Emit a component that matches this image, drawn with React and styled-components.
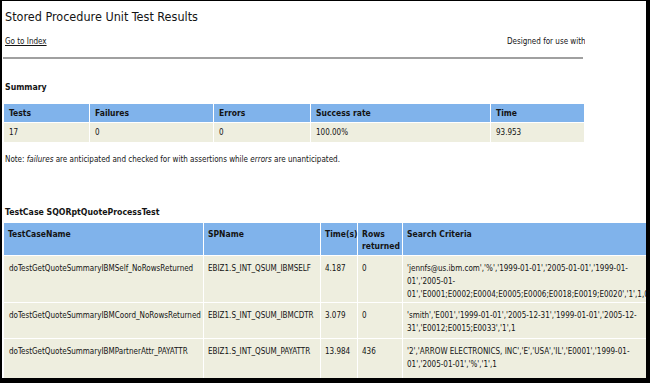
import React from "react";
import styled, { createGlobalStyle } from "styled-components";

const Global = createGlobalStyle`
  html, body { margin: 0; padding: 0; background: #fff; }
  body { font-family: "DejaVu Sans Condensed", "Liberation Sans Narrow", "Liberation Sans", sans-serif; color: #141414; }
`;

const Frame = styled.div`
  width: 650px;
  height: 383px;
  box-sizing: border-box;
  border-style: solid;
  border-color: #000;
  border-width: 1px 4px 5px 2px;
  overflow: hidden;
  background: #fff;
  padding-left: 1px;
`;

const Title = styled.h1`
  margin: 0;
  padding: 6px 0 0 2px;
  font-size: 12.5px;
  font-weight: normal;
  line-height: 20px;
  white-space: nowrap;
`;

const HeaderBar = styled.div`
  width: 582px;
  display: grid;
  grid-template-columns: 1fr 78px;
  font-size: 8px;
  line-height: 12px;
  margin-top: 9px;
  padding-left: 2px;
  box-sizing: border-box;
`;

const IndexLink = styled.a`
  color: #141414;
  text-decoration: underline;
`;

const Clip = styled.span`
  white-space: nowrap;
  overflow: hidden;
`;

const Rule = styled.hr`
  width: 580px;
  margin: 9px 0 0 0;
  border: 0;
  border-top: 2px solid #a0a0a0;
`;

const Heading = styled.h2`
  margin: ${(p) => p.$top}px 0 0 2px;
  font-size: 8.7px;
  font-weight: bold;
  line-height: 12px;
`;

const Table = styled.table`
  border-collapse: separate;
  border-spacing: 1px;
  table-layout: fixed;
  width: ${(p) => p.$width}px;
  margin-top: ${(p) => p.$top}px;
  font-size: 8px;
`;

const Th = styled.th`
  box-sizing: border-box;
  background: #80b3eb;
  text-align: left;
  font-weight: bold;
  font-size: 8.5px;
  vertical-align: top;
  padding: ${(p) => p.$pad};
  line-height: 12px;
  width: ${(p) => (p.$w ? p.$w + "px" : "auto")};
`;

const Tr = styled.tr`
  height: ${(p) => (p.$h ? p.$h + "px" : "auto")};
`;

const Td = styled.td`
  box-sizing: border-box;
  background: #eeeedf;
  vertical-align: top;
  padding: ${(p) => p.$pad};
  line-height: ${(p) => p.$lh}px;
  white-space: nowrap;
  overflow: ${(p) => (p.$visible ? "visible" : "hidden")};
`;

const Note = styled.p`
  margin: 11px 0 0 2px;
  font-size: 8px;
  line-height: 12px;
`;

const summaryCols = [
  { label: "Tests", w: 85, value: "17" },
  { label: "Failures", w: 123, value: "0" },
  { label: "Errors", w: 96, value: "0" },
  { label: "Success rate", w: 179, value: "100.00%" },
  { label: "Time", w: 93, value: "93.953" },
];

const detailCols = [
  { label: "TestCaseName", w: 199 },
  { label: "SPName", w: 116 },
  { label: "Time(s)", w: 36 },
  { label: "Rows returned", w: 44 },
  { label: "Search Criteria", w: 300 },
];

const rows = [
  {
    h: 46,
    name: "doTestGetQuoteSummaryIBMSelf_NoRowsReturned",
    sp: "EBIZ1.S_INT_QSUM_IBMSELF",
    time: "4.187",
    rows: "0",
    crit: [
      "'jennfs@us.ibm.com','%','1999-01-01','2005-01-01','1999-01-",
      "01','2005-01-",
      "01','E0001;E0002;E0004;E0005;E0006;E0018;E0019;E0020','1',1,0",
    ],
  },
  {
    h: 35,
    name: "doTestGetQuoteSummaryIBMCoord_NoRowsReturned",
    sp: "EBIZ1.S_INT_QSUM_IBMCDTR",
    time: "3.079",
    rows: "0",
    crit: [
      "'smith','E001','1999-01-01','2005-12-31','1999-01-01','2005-12-",
      "31','E0012;E0015;E0033','1',1",
    ],
  },
  {
    h: 45,
    name: "doTestGetQuoteSummaryIBMPartnerAttr_PAYATTR",
    sp: "EBIZ1.S_INT_QSUM_PAYATTR",
    time: "13.984",
    rows: "436",
    crit: [
      "'2','ARROW ELECTRONICS, INC','E','USA','IL','E0001','1999-01-",
      "01','2005-01-01','%','1',1",
    ],
  },
];

export default function App() {
  return (
    <>
      <Global />
      <Frame>
        <Title>Stored Procedure Unit Test Results</Title>
        <HeaderBar>
          <span>
            <IndexLink href="#">Go to Index</IndexLink>
          </span>
          <Clip>Designed for use with JUnit and Ant.</Clip>
        </HeaderBar>
        <Rule />
        <Heading $top={22}>Summary</Heading>
        <Table $width={582} $top={10}>
          <thead>
            <tr>
              {summaryCols.map((c) => (
                <Th key={c.label} $w={c.w} $pad="3px 4px 3px 5px">
                  {c.label}
                </Th>
              ))}
            </tr>
          </thead>
          <tbody>
            <tr>
              {summaryCols.map((c) => (
                <Td key={c.label} $pad="4px 4px 3px 5px" $lh={12}>
                  {c.value}
                </Td>
              ))}
            </tr>
          </tbody>
        </Table>
        <Note>
          Note: <i>failures</i> are anticipated and checked for with assertions while <i>errors</i> are unanticipated.
        </Note>
        <Heading $top={40}>TestCase SQORptQuoteProcessTest</Heading>
        <Table $width={700} $top={4}>
          <thead>
            <tr>
              {detailCols.map((c) => (
                <Th key={c.label} $w={c.w} $pad="5px 1px 3px 4px">
                  {c.label}
                </Th>
              ))}
            </tr>
          </thead>
          <tbody>
            {rows.map((r) => (
              <Tr key={r.name} $h={r.h}>
                <Td $pad="6px 2px 1px 5px" $lh={13}>{r.name}</Td>
                <Td $pad="6px 2px 1px 4px" $lh={13}>{r.sp}</Td>
                <Td $pad="6px 2px 1px 4px" $lh={13}>{r.time}</Td>
                <Td $pad="6px 2px 1px 4px" $lh={13}>{r.rows}</Td>
                <Td $pad="6px 2px 1px 4px" $lh={13} $visible>
                  {r.crit.map((l, i) => (
                    <React.Fragment key={i}>
                      {i > 0 && <br />}
                      {l}
                    </React.Fragment>
                  ))}
                </Td>
              </Tr>
            ))}
          </tbody>
        </Table>
      </Frame>
    </>
  );
}
